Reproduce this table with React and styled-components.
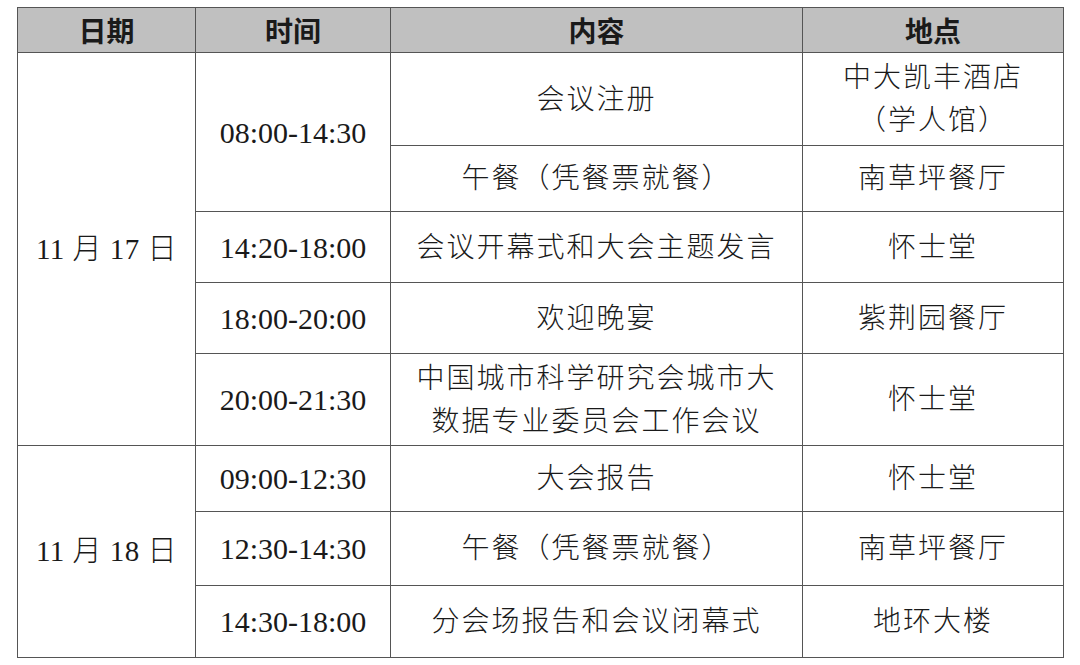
import React from "react";
import styled, { createGlobalStyle } from "styled-components";

const Global = createGlobalStyle`
  html, body { margin: 0; padding: 0; background: #fff; }
  body { font-family: "Liberation Serif", "Noto Sans CJK SC", serif; color: #1a1a1a; }
`;

const Page = styled.div`
  padding: 7px 0 0 17px;
`;

const Table = styled.table`
  border-collapse: collapse;
  table-layout: fixed;
  width: 1046px;
  border: 1.5px solid #555;
`;

const Col = styled.col`
  width: ${(p) => p.$w}px;
`;

const HeadCell = styled.th`
  background: #c0c0c0;
  height: 44px;
  padding: 0;
  border: 1.5px solid #555;
  font-family: "Noto Sans CJK SC", sans-serif;
  font-weight: 700;
  font-size: 28px;
  line-height: 40px;
  color: #1a1a1a;
  text-align: center;
  vertical-align: middle;
`;

const Cell = styled.td`
  padding: 0 4px;
  border: 1.5px solid #555;
  text-align: center;
  vertical-align: middle;
  font-size: 28px;
  line-height: 43px;
  font-weight: 300;
  letter-spacing: 2px;
`;

const TimeCell = styled(Cell)`
  font-family: "Liberation Serif", serif;
  font-weight: 400;
  font-size: 30px;
  letter-spacing: 0;
`;

const DateCell = styled(Cell)`
  font-size: 29px;
  letter-spacing: 0.5px;
`;

const Row = styled.tr`
  height: ${(p) => p.$h}px;
`;

const Line = styled.div``;

const rows = [
  { h: 93, date: "11 月 17 日", dateSpan: 5, time: "08:00-14:30", timeSpan: 2, content: ["会议注册"], place: ["中大凯丰酒店", "（学人馆）"] },
  { h: 66, content: ["午餐（凭餐票就餐）"], place: ["南草坪餐厅"] },
  { h: 71, time: "14:20-18:00", content: ["会议开幕式和大会主题发言"], place: ["怀士堂"] },
  { h: 71, time: "18:00-20:00", content: ["欢迎晚宴"], place: ["紫荆园餐厅"] },
  { h: 92, time: "20:00-21:30", content: ["中国城市科学研究会城市大", "数据专业委员会工作会议"], place: ["怀士堂"] },
  { h: 66, date: "11 月 18 日", dateSpan: 3, time: "09:00-12:30", content: ["大会报告"], place: ["怀士堂"] },
  { h: 74, time: "12:30-14:30", content: ["午餐（凭餐票就餐）"], place: ["南草坪餐厅"] },
  { h: 72, time: "14:30-18:00", content: ["分会场报告和会议闭幕式"], place: ["地环大楼"] },
];

export default function App() {
  return (
    <>
      <Global />
      <Page>
        <Table>
          <colgroup>
            <Col $w={178} />
            <Col $w={195} />
            <Col $w={412} />
            <Col $w={261} />
          </colgroup>
          <thead>
            <tr>
              <HeadCell>日期</HeadCell>
              <HeadCell>时间</HeadCell>
              <HeadCell>内容</HeadCell>
              <HeadCell>地点</HeadCell>
            </tr>
          </thead>
          <tbody>
            {rows.map((r, i) => (
              <Row key={i} $h={r.h}>
                {r.date && <DateCell rowSpan={r.dateSpan}>{r.date}</DateCell>}
                {r.time && <TimeCell rowSpan={r.timeSpan || 1}>{r.time}</TimeCell>}
                <Cell>
                  {r.content.map((t) => (
                    <Line key={t}>{t}</Line>
                  ))}
                </Cell>
                <Cell>
                  {r.place.map((t) => (
                    <Line key={t}>{t}</Line>
                  ))}
                </Cell>
              </Row>
            ))}
          </tbody>
        </Table>
      </Page>
    </>
  );
}
